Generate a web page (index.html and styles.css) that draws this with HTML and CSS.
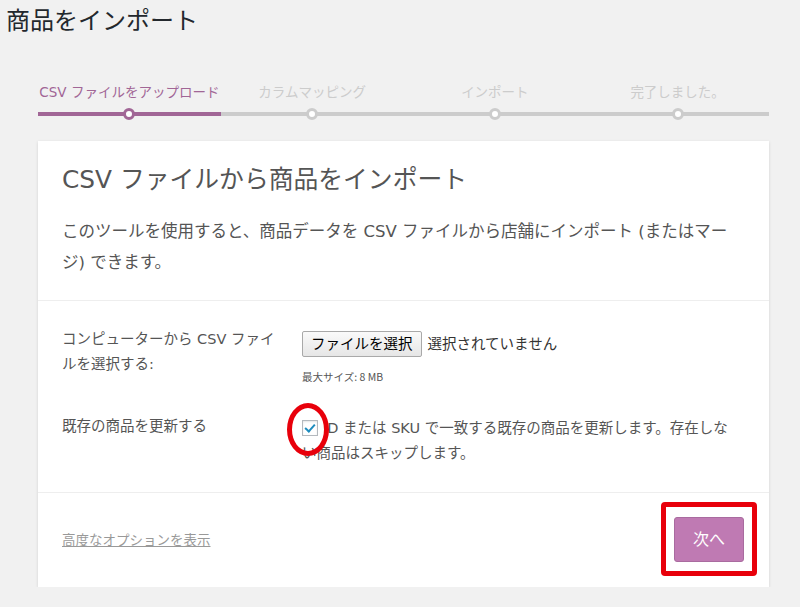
FILE: index.html
```html
<!DOCTYPE html>
<html lang="ja">
<head>
<meta charset="utf-8">
<title>商品をインポート</title>
<link rel="stylesheet" href="styles.css">
</head>
<body>
<div class="wrap">
  <h1 class="page-title">商品をインポート</h1>
  <div class="content">
    <ol class="steps">
      <li class="step active">CSV ファイルをアップロード</li>
      <li class="step">カラムマッピング</li>
      <li class="step">インポート</li>
      <li class="step">完了しました。</li>
    </ol>
    <form class="card">
      <header class="card-head">
        <h2 class="card-title">CSV ファイルから商品をインポート</h2>
        <p class="card-desc">このツールを使用すると、商品データを CSV ファイルから店舗にインポート (またはマージ) できます。</p>
      </header>
      <section class="card-body">
        <div class="form-grid">
          <label class="f-label" for="upload">コンピューターから CSV ファイルを選択する:</label>
          <div class="f-field">
            <div class="file-line">
              <button type="button" class="file-btn" id="upload">ファイルを選択</button>
              <span class="file-none">選択されていません</span>
            </div>
            <small class="max-size">最大サイズ: 8 MB</small>
          </div>
          <div class="f-label">既存の商品を更新する</div>
          <div class="f-field f-field-check">
            <label class="check-label"><span class="cb-wrap"><input type="checkbox" class="cb" checked><span class="annot-circle"></span></span>ID または SKU で一致する既存の商品を更新します。存在しない商品はスキップします。</label>
          </div>
        </div>
      </section>
      <footer class="card-foot">
        <a href="#" class="adv-link">高度なオプションを表示</a>
        <span class="next-wrap"><button type="button" class="next-btn">次へ</button><span class="annot-rect"></span></span>
      </footer>
    </form>
  </div>
</div>
</body>
</html>
```
FILE: styles.css
```css
html, body {
  margin: 0;
  padding: 0;
}
body {
  background: #f1f1f1;
  font-family: "DejaVu Sans", "Noto Sans CJK JP", sans-serif;
  color: #555;
}
.wrap {
  padding: 6px 0 0 6px;
}
.page-title {
  margin: 0;
  font-size: 24px;
  line-height: 30px;
  font-weight: 400;
  color: #23282d;
}
.content {
  margin: 46px 31px 0 32px;
}
.steps {
  list-style: none;
  margin: 0;
  padding: 0;
  display: flex;
}
.step {
  flex: 1;
  position: relative;
  text-align: center;
  font-size: 13.5px;
  line-height: 20px;
  color: #ccc;
  padding-bottom: 10px;
  border-bottom: 4px solid #ccc;
}
.step::before {
  content: "";
  position: absolute;
  left: 50%;
  bottom: -8px;
  width: 6px;
  height: 6px;
  margin-left: -6px;
  border: 3px solid #ccc;
  border-radius: 50%;
  background: #fff;
}
.step.active {
  color: #a16696;
  border-bottom-color: #a16696;
}
.step.active::before {
  border-color: #a16696;
}
.card {
  display: block;
  margin-top: 25px;
  background: #fff;
  box-shadow: 0 1px 3px rgba(0, 0, 0, 0.13);
}
.card-head {
  padding: 23px 24px 22px;
}
.card-title {
  margin: 0;
  font-size: 24.8px;
  line-height: 32px;
  font-weight: 400;
  color: #555;
}
.card-desc {
  margin: 20px 0 0;
  font-size: 16.5px;
  line-height: 31px;
  color: #555;
}
.card-body {
  border-top: 1px solid #eee;
  padding: 26px 24px 26px;
}
.form-grid {
  display: grid;
  grid-template-columns: 215px 1fr;
  column-gap: 25px;
  row-gap: 29px;
  font-size: 14.5px;
  line-height: 25px;
}
.f-label {
  color: #555;
}
.file-line {
  display: flex;
  align-items: center;
  gap: 6px;
  margin-top: 4px;
}
.file-btn {
  font-family: inherit;
  font-size: 14.5px;
  line-height: 22px;
  height: 26px;
  padding: 0 8px;
  color: #000;
  background: linear-gradient(#fafafa, #e6e6e6);
  border: 1px solid #a9a9a9;
  border-radius: 2px;
}
.file-none {
  color: #333;
}
.max-size {
  display: block;
  margin-top: 12px;
  font-family: "Noto Sans CJK JP", sans-serif;
  font-size: 10.5px;
  line-height: 16px;
  color: #555;
}
.f-field-check {
  padding-top: 2px;
}
.check-label {
  display: block;
  max-width: 432px;
  color: #555;
}
.cb-wrap {
  position: relative;
  display: inline-block;
  vertical-align: -3px;
  margin-right: 5px;
}
.cb {
  appearance: none;
  -webkit-appearance: none;
  display: block;
  margin: 0;
  width: 16px;
  height: 16px;
  border: 1px solid #b4b9be;
  background: #fff;
  box-shadow: inset 0 1px 2px rgba(0, 0, 0, 0.1);
  box-sizing: border-box;
  position: relative;
}
.cb:checked::before {
  content: "";
  position: absolute;
  left: 4px;
  top: 1px;
  width: 4px;
  height: 8px;
  border-right: 2.5px solid #1e8cbe;
  border-bottom: 2.5px solid #1e8cbe;
  transform: rotate(42deg);
}
.annot-circle {
  position: absolute;
  left: -15px;
  top: -17px;
  width: 32px;
  height: 43px;
  border: 5px solid #e8000b;
  border-radius: 50%;
  pointer-events: none;
}
.card-foot {
  border-top: 1px solid #eee;
  padding: 24px 25px 25px 24px;
  display: flex;
  align-items: center;
  justify-content: space-between;
}
.adv-link {
  font-size: 13.5px;
  line-height: 20px;
  color: #999;
  text-decoration: underline;
}
.next-wrap {
  position: relative;
  display: inline-block;
}
.next-btn {
  display: block;
  font-family: inherit;
  font-size: 16px;
  line-height: 43px;
  height: 45px;
  padding: 0 18px;
  color: #fff;
  background: #bf7ab3;
  border: 1px solid #a96b9f;
  border-radius: 3px;
}
.annot-rect {
  position: absolute;
  left: -13px;
  right: -13px;
  top: -15px;
  bottom: -14px;
  border: 5px solid #e8000b;
  border-radius: 4px;
  pointer-events: none;
}
```
